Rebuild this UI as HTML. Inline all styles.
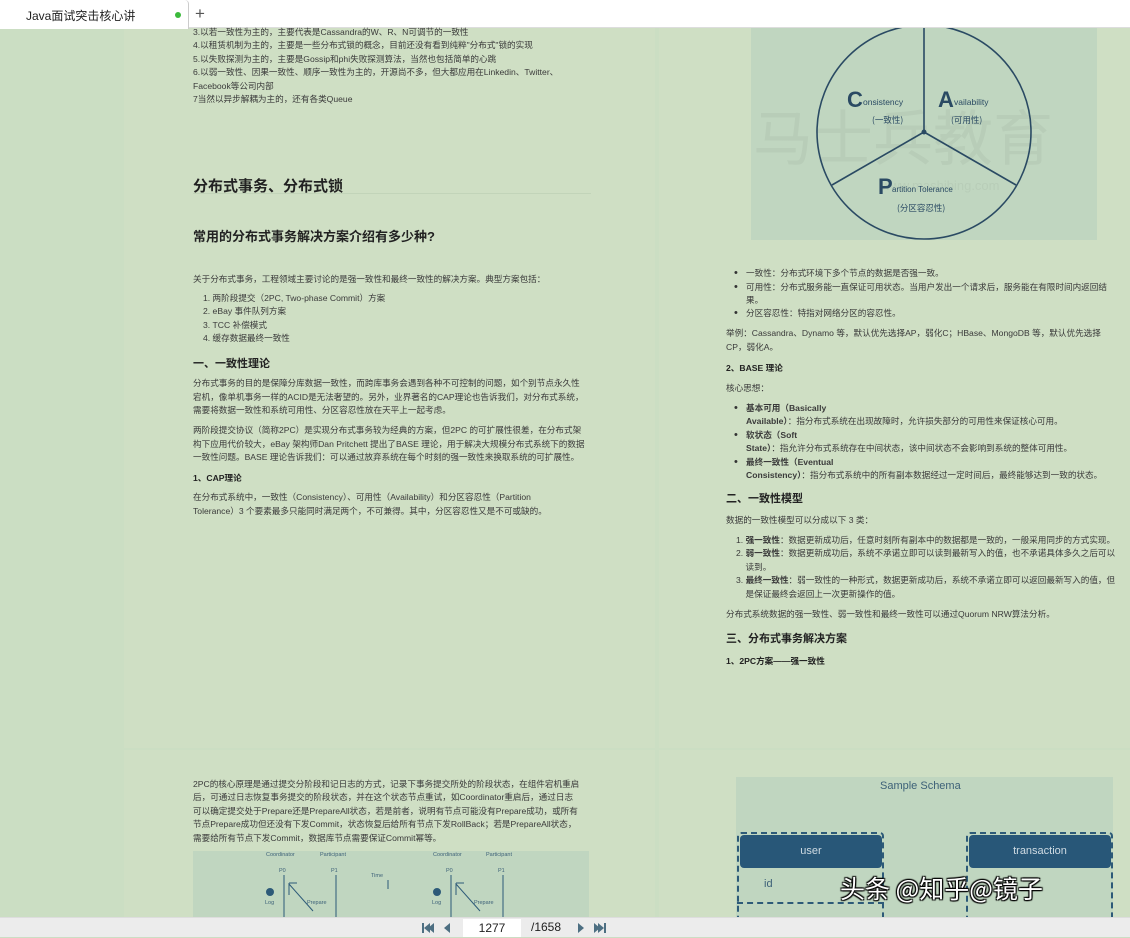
<!DOCTYPE html>
<html><head><meta charset="utf-8">
<style>
*{margin:0;padding:0;box-sizing:border-box}
body{width:1130px;height:937px;overflow:hidden;background:#cbdec3;font-family:"Liberation Sans","Noto Sans CJK SC",sans-serif;color:#333;position:relative}
.a{position:absolute;white-space:nowrap}
.t{font-size:8.6px;color:#3a3a3a}
.b{font-weight:bold;color:#222}
.page{position:absolute;background:#cfdfc4}
.dot{font-size:11px;line-height:11px}
</style></head><body>
<div class="page" style="left:124px;top:28px;width:531px;height:720px"></div>
<div class="page" style="left:659px;top:28px;width:471px;height:720px"></div>
<div class="page" style="left:124px;top:750px;width:531px;height:170px"></div>
<div class="page" style="left:659px;top:750px;width:471px;height:170px"></div>

<!-- tab bar -->
<div class="a" style="left:0;top:0;width:1130px;height:28px;background:#fff;border-bottom:1px solid #ddd"></div>
<div class="a" style="left:0;top:0;width:189px;height:29px;background:#fff;border-right:1px solid #ccc;border-radius:0 4px 0 0"></div>
<div class="a" style="left:26px;top:7px;font-size:12px;color:#222">Java面试突击核心讲</div>
<div class="a" style="left:175px;top:12px;width:6px;height:6px;border-radius:50%;background:#3bba3b"></div>
<div class="a" style="left:195px;top:4px;font-size:17px;color:#555;font-weight:300">+</div>

<!-- left page top -->
<div class="a t" style="left:193px;top:26px;line-height:13.4px">3.以若一致性为主的，主要代表是Cassandra的W、R、N可调节的一致性<br>4.以租赁机制为主的，主要是一些分布式锁的概念，目前还没有看到纯粹"分布式"锁的实现<br>5.以失败探测为主的，主要是Gossip和phi失败探测算法，当然也包括简单的心跳<br>6.以弱一致性、因果一致性、顺序一致性为主的，开源尚不多，但大都应用在Linkedin、Twitter、<br>Facebook等公司内部<br>7当然以异步解耦为主的，还有各类Queue</div>
<div class="a b" style="left:193px;top:175px;font-size:15px">分布式事务、分布式锁</div>
<div class="a" style="left:193px;top:193px;width:398px;border-top:1px solid #c2d4b9"></div>
<div class="a b" style="left:193px;top:226px;font-size:13px">常用的分布式事务解决方案介绍有多少种?</div>
<div class="a t" style="left:193px;top:273px">关于分布式事务，工程领域主要讨论的是强一致性和最终一致性的解决方案。典型方案包括：</div>
<div class="a t" style="left:203px;top:292px;line-height:13.4px">1. 两阶段提交（2PC, Two-phase Commit）方案<br>2. eBay 事件队列方案<br>3. TCC 补偿模式<br>4. 缓存数据最终一致性</div>
<div class="a b" style="left:193px;top:355px;font-size:11px">一、一致性理论</div>
<div class="a t" style="left:193px;top:377px;line-height:13.5px">分布式事务的目的是保障分库数据一致性，而跨库事务会遇到各种不可控制的问题，如个别节点永久性<br>宕机，像单机事务一样的ACID是无法奢望的。另外，业界著名的CAP理论也告诉我们，对分布式系统，<br>需要将数据一致性和系统可用性、分区容忍性放在天平上一起考虑。</div>
<div class="a t" style="left:193px;top:424px;line-height:13.5px">两阶段提交协议（简称2PC）是实现分布式事务较为经典的方案，但2PC 的可扩展性很差，在分布式架<br>构下应用代价较大，eBay 架构师Dan Pritchett 提出了BASE 理论，用于解决大规模分布式系统下的数据<br>一致性问题。BASE 理论告诉我们：可以通过放弃系统在每个时刻的强一致性来换取系统的可扩展性。</div>
<div class="a b" style="left:193px;top:472px;font-size:8.6px">1、CAP理论</div>
<div class="a t" style="left:193px;top:491px;line-height:13.5px">在分布式系统中，一致性（Consistency）、可用性（Availability）和分区容忍性（Partition<br>Tolerance）3 个要素最多只能同时满足两个，不可兼得。其中，分区容忍性又是不可或缺的。</div>

<!-- CAP image -->
<div class="a" style="left:751px;top:28px;width:346px;height:212px;background:#c0d6c0"></div>
<svg class="a" style="left:751px;top:28px" width="346" height="212" viewBox="0 0 346 212">
<text x="2" y="132" font-size="60" fill="#b8cdb8" font-family="Noto Sans CJK SC">马士兵教育</text>
<text x="130" y="162" font-size="13" fill="#b8cdb8">www.mashibing.com</text>
<circle cx="173" cy="104" r="107" fill="none" stroke="#2a4a63" stroke-width="1.6"/>
<line x1="173" y1="-5" x2="173" y2="104" stroke="#2a4a63" stroke-width="1.6"/>
<line x1="173" y1="104" x2="81" y2="157" stroke="#2a4a63" stroke-width="1.6"/>
<line x1="173" y1="104" x2="265" y2="157" stroke="#2a4a63" stroke-width="1.6"/>
<circle cx="173" cy="104" r="2.5" fill="#2a4a63"/>
<text x="96" y="79" font-size="22" font-weight="bold" fill="#2a4a63">C</text><text x="112" y="77" font-size="8.5" fill="#2a4a63">onsistency</text>
<text x="121" y="95" font-size="8.5" fill="#2a4a63" font-family="Noto Sans CJK SC">(一致性)</text>
<text x="187" y="79" font-size="22" font-weight="bold" fill="#2a4a63">A</text><text x="203" y="77" font-size="8.5" fill="#2a4a63">vailability</text>
<text x="200" y="95" font-size="8.5" fill="#2a4a63" font-family="Noto Sans CJK SC">(可用性)</text>
<text x="127" y="166" font-size="22" font-weight="bold" fill="#2a4a63">P</text><text x="141" y="164" font-size="8" fill="#2a4a63">artition Tolerance</text>
<text x="146" y="183" font-size="8.5" fill="#2a4a63" font-family="Noto Sans CJK SC">(分区容忍性)</text>
</svg>

<!-- right page text -->
<div class="a dot" style="left:734px;top:268px">•</div><div class="a t" style="left:746px;top:267px">一致性：分布式环境下多个节点的数据是否强一致。</div>
<div class="a dot" style="left:734px;top:282px">•</div><div class="a t" style="left:746px;top:281px;line-height:13.4px">可用性：分布式服务能一直保证可用状态。当用户发出一个请求后，服务能在有限时间内返回结<br>果。</div>
<div class="a dot" style="left:734px;top:308px">•</div><div class="a t" style="left:746px;top:307px">分区容忍性：特指对网络分区的容忍性。</div>
<div class="a t" style="left:726px;top:327px;line-height:13.5px">举例：Cassandra、Dynamo 等，默认优先选择AP，弱化C；HBase、MongoDB 等，默认优先选择<br>CP，弱化A。</div>
<div class="a b" style="left:726px;top:362px;font-size:8.6px">2、BASE 理论</div>
<div class="a t" style="left:726px;top:382px">核心思想：</div>
<div class="a dot" style="left:734px;top:403px">•</div><div class="a t" style="left:746px;top:402px;line-height:13.4px"><b>基本可用（Basically<br>Available）</b>：指分布式系统在出现故障时，允许损失部分的可用性来保证核心可用。</div>
<div class="a dot" style="left:734px;top:430px">•</div><div class="a t" style="left:746px;top:429px;line-height:13.4px"><b>软状态（Soft<br>State）</b>：指允许分布式系统存在中间状态，该中间状态不会影响到系统的整体可用性。</div>
<div class="a dot" style="left:734px;top:457px">•</div><div class="a t" style="left:746px;top:456px;line-height:13.4px"><b>最终一致性（Eventual<br>Consistency）</b>：指分布式系统中的所有副本数据经过一定时间后，最终能够达到一致的状态。</div>
<div class="a b" style="left:726px;top:490px;font-size:11px">二、一致性模型</div>
<div class="a t" style="left:726px;top:514px">数据的一致性模型可以分成以下 3 类：</div>
<div class="a t" style="left:736px;top:534px;line-height:13.4px">1. <b>强一致性</b>：数据更新成功后，任意时刻所有副本中的数据都是一致的，一般采用同步的方式实现。<br>2. <b>弱一致性</b>：数据更新成功后，系统不承诺立即可以读到最新写入的值，也不承诺具体多久之后可以<br>&nbsp;&nbsp;&nbsp;&nbsp;读到。<br>3. <b>最终一致性</b>：弱一致性的一种形式，数据更新成功后，系统不承诺立即可以返回最新写入的值，但<br>&nbsp;&nbsp;&nbsp;&nbsp;是保证最终会返回上一次更新操作的值。</div>
<div class="a t" style="left:726px;top:608px">分布式系统数据的强一致性、弱一致性和最终一致性可以通过Quorum NRW算法分析。</div>
<div class="a b" style="left:726px;top:630px;font-size:11px">三、分布式事务解决方案</div>
<div class="a b" style="left:726px;top:655px;font-size:8.6px">1、2PC方案——强一致性</div>

<!-- bottom left -->
<div class="a t" style="left:193px;top:778px;line-height:13.4px">2PC的核心原理是通过提交分阶段和记日志的方式，记录下事务提交所处的阶段状态，在组件宕机重启<br>后，可通过日志恢复事务提交的阶段状态，并在这个状态节点重试，如Coordinator重启后，通过日志<br>可以确定提交处于Prepare还是PrepareAll状态，若是前者，说明有节点可能没有Prepare成功，或所有<br>节点Prepare成功但还没有下发Commit，状态恢复后给所有节点下发RollBack；若是PrepareAll状态，<br>需要给所有节点下发Commit，数据库节点需要保证Commit幂等。</div>
<div class="a" style="left:193px;top:851px;width:396px;height:70px;background:#c0d6c0"></div>
<svg class="a" style="left:193px;top:851px" width="396" height="70" viewBox="0 0 396 70">
<g font-size="5.5" fill="#3d6178">
<text x="73" y="5">Coordinator</text><text x="127" y="5">Participant</text>
<text x="86" y="21">P0</text><text x="138" y="21">P1</text><text x="178" y="26">Time</text>
<text x="72" y="53">Log</text><text x="114" y="53">Prepare</text>
<text x="240" y="5">Coordinator</text><text x="293" y="5">Participant</text>
<text x="253" y="21">P0</text><text x="305" y="21">P1</text>
<text x="239" y="53">Log</text><text x="281" y="53">Prepare</text>
</g>
<g stroke="#2d5a78" stroke-width="1" fill="none">
<line x1="91" y1="24" x2="91" y2="70"/><line x1="143" y1="24" x2="143" y2="70"/>
<line x1="96" y1="32" x2="96" y2="44"/><line x1="96" y1="32" x2="104" y2="32"/><line x1="96" y1="33" x2="120" y2="60"/>
<line x1="195" y1="29" x2="195" y2="38"/>
<line x1="258" y1="24" x2="258" y2="70"/><line x1="310" y1="24" x2="310" y2="70"/>
<line x1="263" y1="32" x2="263" y2="44"/><line x1="263" y1="32" x2="271" y2="32"/><line x1="263" y1="33" x2="287" y2="60"/>
</g>
<circle cx="77" cy="41" r="4" fill="#2d5a78"/><circle cx="244" cy="41" r="4" fill="#2d5a78"/>
</svg>

<!-- bottom right schema -->
<div class="a" style="left:736px;top:777px;width:377px;height:143px;background:#c0d6c0"></div>
<div class="a" style="left:880px;top:780px;font-size:11px;color:#3d6178">Sample Schema</div>
<div class="a" style="left:737px;top:832px;width:147px;height:90px;border:2px dashed #2d5a78;border-radius:4px"></div>
<div class="a" style="left:966px;top:832px;width:147px;height:90px;border:2px dashed #2d5a78;border-radius:4px"></div>
<div class="a" style="left:737px;top:902px;width:147px;border-top:2px dashed #2d5a78"></div>
<div class="a" style="left:740px;top:835px;width:142px;height:33px;background:#285778;border-radius:4px;color:#cfdbe3;font-size:11px;text-align:center;line-height:33px">user</div>
<div class="a" style="left:969px;top:835px;width:142px;height:33px;background:#285778;border-radius:4px;color:#cfdbe3;font-size:11px;text-align:center;line-height:33px">transaction</div>
<div class="a" style="left:764px;top:878px;font-size:11px;color:#3d6178">id</div>
<div class="a" style="left:840px;top:870px;font-size:25px;color:#fff;font-family:'Noto Sans CJK SC',sans-serif;text-shadow:1px 1px 1px #000,-1px -1px 1px #000,1px -1px 1px #000,-1px 1px 1px #000">头条 @知乎@镜子</div>

<!-- bottom toolbar -->
<div class="a" style="left:0;top:917px;width:1130px;height:20px;background:#ececec;border-top:1px solid #ddd"></div>
<svg class="a" style="left:420px;top:921px" width="40" height="14"><g fill="#4d6f82"><rect x="2" y="2" width="2" height="10"/><polygon points="10,2 4,7 10,12"/><polygon points="14,2 8,7 14,12"/><polygon points="30,2 24,7 30,12"/></g></svg>
<div class="a" style="left:463px;top:919px;width:58px;height:18px;background:#fff;font-size:12px;text-align:center;line-height:19px;color:#222">1277</div>
<div class="a" style="left:531px;top:920px;font-size:12px;color:#222">/1658</div>
<svg class="a" style="left:576px;top:921px" width="34" height="14"><g fill="#4d6f82"><polygon points="2,2 8,7 2,12"/><polygon points="18,2 24,7 18,12"/><polygon points="22,2 28,7 22,12"/><rect x="28" y="2" width="2" height="10"/></g></svg>
</body></html>
